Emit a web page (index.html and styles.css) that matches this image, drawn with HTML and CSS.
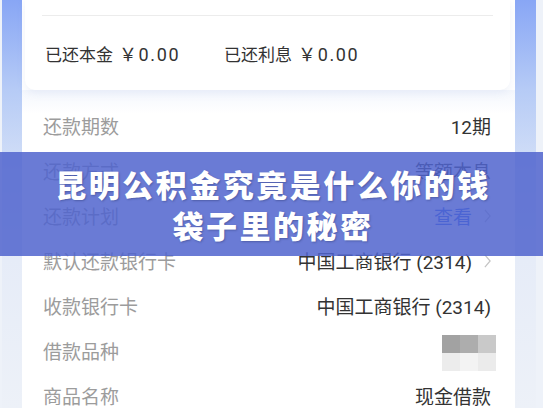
FILE: index.html
```html
<!DOCTYPE html>
<html lang="zh-CN">

<head>
    <meta charset="UTF-8" />
    <meta name="viewport" content="width=device-width, initial-scale=1.0" />
    <title>借款详情</title>
    <link rel="stylesheet" href="styles.css">
</head>

<body>
    <div class="screen">
        <div class="page">
            <section class="summary">
                <div class="paid">
                    <span>已还本金<span class="amt">￥0.00</span></span>
                    <span>已还利息<span class="amt">￥0.00</span></span>
                </div>
            </section>

            <ul class="details">
                <li><span class="label">还款期数</span><span class="value">12期</span></li>
                <li><span class="label">还款方式</span><span class="value">等额本息</span></li>
                <li>
                    <span class="label">还款计划</span>
                    <span class="value link">查看
                        <svg class="arrow" viewBox="0 0 8 16"><polyline points="1,1 7,8 1,15" /></svg>
                    </span>
                </li>
                <li>
                    <span class="label">默认还款银行卡</span>
                    <span class="value">中国工商银行 (2314)
                        <svg class="arrow" viewBox="0 0 8 16"><polyline points="1,1 7,8 1,15" /></svg>
                    </span>
                </li>
                <li><span class="label">收款银行卡</span><span class="value">中国工商银行 (2314)</span></li>
                <li>
                    <span class="label">借款品种</span>
                    <span class="mosaic">
                        <i class="m1"></i><i class="m2"></i><i class="m3"></i>
                        <i class="m4"></i><i class="m5"></i><i class="m6"></i>
                    </span>
                </li>
                <li><span class="label">商品名称</span><span class="value">现金借款</span></li>
            </ul>
        </div>
    </div>

    <div class="banner">
        <h1>昆明公积金究竟是什么你的钱<br>袋子里的秘密</h1>
    </div>
</body>

</html>
```

FILE: styles.css
```css
body {
    margin: 0;
    height: 408px;
    overflow: hidden;
    background: #eef2f9;
    font-family: Roboto, "Noto Sans CJK SC", sans-serif;
}

.screen {
    margin: 0 7px 0 2px;
    height: 408px;
    padding: 0 21px 0 20px;
    background: linear-gradient(#88a6f5 0, #b6cbf6 90px, #d4e0f7 170px, #e6ecf8 260px, #edf1f8 100%);
}

.page {
    background: #fff;
    height: 408px;
}

.summary {
    margin: 0 5px 0 3px;
    padding: 15px 17px 0;
    background: #fff;
    border-radius: 0 0 10px 10px;
    box-shadow: 0 3px 8px rgba(140, 160, 210, 0.14);
    position: relative;
}

.paid {
    border-top: 1px solid #ececec;
    padding: 27px 0 23px 3px;
    line-height: 24px;
    font-size: 17px;
    color: #333;
    display: flex;
    gap: 44px;
}

.amt {
    margin-left: 6px;
    font-size: 18px;
    letter-spacing: 1.6px;
}

.details {
    list-style: none;
    margin: 0;
    padding: 13px 0 0;
    background: linear-gradient(#f4f7fd, #fff 24px);
}

.details li {
    height: 45px;
    display: flex;
    justify-content: space-between;
    align-items: center;
    padding: 0 24px 0 21px;
    font-size: 19px;
}

.label {
    color: #9c9c9c;
}

.value {
    color: #333;
    display: flex;
    align-items: center;
    gap: 12px;
}

.link {
    color: #2f66ee;
}

.arrow {
    width: 7px;
    height: 14px;
    fill: none;
    stroke: #c4c4c4;
    stroke-width: 1.4;
}

.mosaic {
    display: grid;
    grid-template-columns: repeat(3, 18px);
    grid-template-rows: repeat(2, 18px);
    margin: 4px -5px 0 0;
}

.mosaic i { display: block; }
.m1 { background: #a2a2a2; }
.m2 { background: #adadad; }
.m3 { background: #c9c9c9; }
.m4 { background: #ececec; }
.m5 { background: #f3f3f3; }
.m6 { background: #ebebeb; }

.banner {
    position: absolute;
    left: 0;
    right: 0;
    top: 152px;
    height: 104px;
    background: rgba(80, 100, 206, 0.85);
    display: flex;
    align-items: center;
    justify-content: center;
}

.banner h1 {
    margin: 0 0 0 3px;
    color: #fff;
    font-family: "Noto Sans CJK SC", sans-serif;
    font-size: 31px;
    font-weight: 900;
    line-height: 41px;
    letter-spacing: 2.5px;
    text-align: center;
    white-space: nowrap;
    text-shadow: 1px 1px 2px rgba(30, 40, 90, 0.35);
}
```
